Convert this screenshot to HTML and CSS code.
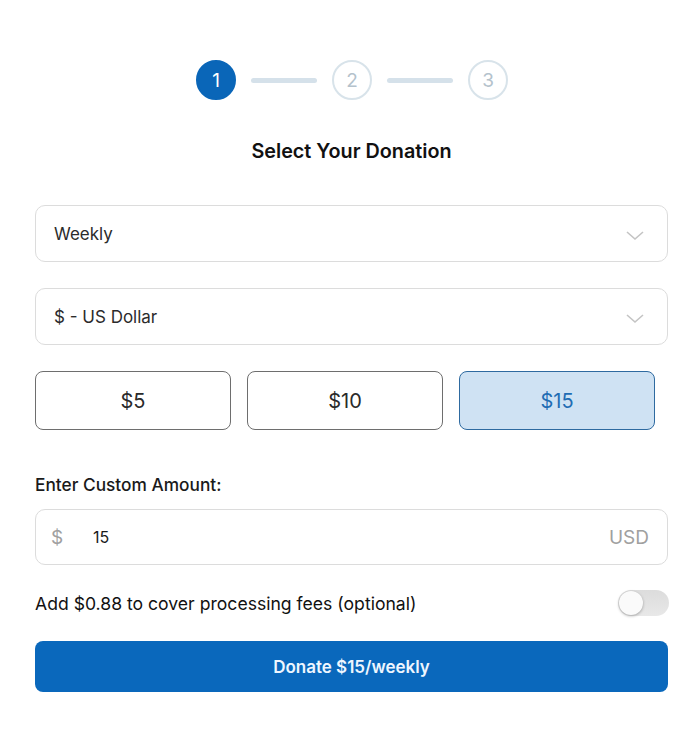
FILE: index.html
```html
<!DOCTYPE html>
<html lang="en">
<head>
<meta charset="utf-8">
<title>Donation</title>
<link rel="stylesheet" href="styles.css">
</head>
<body>
<main class="form">
  <div class="steps">
    <div class="step active">1</div>
    <div class="step-line"></div>
    <div class="step">2</div>
    <div class="step-line"></div>
    <div class="step">3</div>
  </div>
  <h1 class="title">Select Your Donation</h1>

  <div class="select first">
    <span>Weekly</span>
    <svg class="chev" width="20" height="12" viewBox="0 0 20 12"><path d="M2 2 L10 9 L18 2" fill="none" stroke="#c4c4c4" stroke-width="1.6"/></svg>
  </div>
  <div class="select">
    <span>$ - US Dollar</span>
    <svg class="chev" width="20" height="12" viewBox="0 0 20 12"><path d="M2 2 L10 9 L18 2" fill="none" stroke="#c4c4c4" stroke-width="1.6"/></svg>
  </div>

  <div class="amounts">
    <div class="amount">$5</div>
    <div class="amount">$10</div>
    <div class="amount selected">$15</div>
  </div>

  <label class="label">Enter Custom Amount:</label>
  <div class="custom">
    <span class="cur">$</span>
    <span class="val">15</span>
    <span class="code">USD</span>
  </div>

  <div class="fees">
    <span>Add $0.88 to cover processing fees (optional)</span>
    <div class="toggle"><div class="knob"></div></div>
  </div>

  <button class="donate">Donate $15/weekly</button>
</main>
</body>
</html>
```

FILE: styles.css
```css
* { box-sizing: border-box; }
body {
  margin: 0;
  background: #fff;
  font-family: Inter, "Noto Sans", sans-serif;
  color: #1a1a1a;
}
.form {
  width: 633px;
  margin: 0 0 0 35px;
  padding-top: 60px;
  display: flex;
  flex-direction: column;
}
.steps {
  display: flex;
  align-items: center;
  justify-content: center;
  gap: 15px;
  margin-left: 1px;
}
.step {
  width: 40px;
  height: 40px;
  border-radius: 50%;
  border: 2px solid #d8e3ea;
  color: #b4c2cc;
  display: flex;
  align-items: center;
  justify-content: center;
  font-size: 19px;
}
.step.active {
  background: #0a66b8;
  border-color: #0a66b8;
  color: #fff;
}
.step-line {
  width: 66px;
  height: 5px;
  border-radius: 3px;
  background: #d5e1ea;
}
.title {
  margin: 38px 0 0;
  text-align: center;
  font-size: 19.8px;
  font-weight: 600;
  color: #111;
  line-height: 26px;
}
.select {
  height: 57px;
  border: 1px solid #dcdcdc;
  border-radius: 10px;
  display: flex;
  align-items: center;
  justify-content: space-between;
  padding: 0 22px 0 18px;
  font-size: 17px;
  color: #2b2b2b;
  margin-top: 26px;
}
.select.first { margin-top: 41px; }
.chev { margin-top: 4px; }
.amounts {
  display: grid;
  grid-template-columns: repeat(3, 196px);
  gap: 16px;
  margin-top: 26px;
}
.amount {
  height: 59px;
  border: 1px solid #6e6e6e;
  border-radius: 8px;
  display: flex;
  align-items: center;
  justify-content: center;
  font-size: 20px;
  color: #2a2a2a;
}
.amount.selected {
  background: #cfe2f3;
  border-color: #2e6aa0;
  color: #1f6db3;
}
.label {
  margin-top: 44px;
  font-size: 17.3px;
  font-weight: 500;
  color: #1a1a1a;
  line-height: 22px;
}
.custom {
  margin-top: 13px;
  height: 56px;
  border: 1px solid #dcdcdc;
  border-radius: 10px;
  display: flex;
  align-items: center;
  padding: 0 18px 0 15px;
}
.cur { font-size: 19px; color: #a0a0a0; width: 42px; }
.val { font-size: 16px; color: #1a1a1a; flex: 1; }
.code { font-size: 19px; color: #a0a0a0; }
.fees {
  margin-top: 25px;
  display: flex;
  align-items: center;
  justify-content: space-between;
  font-size: 17.6px;
  color: #111;
}
.toggle {
  width: 51px;
  height: 26px;
  border-radius: 13px;
  background: linear-gradient(#dcdcdc, #e8e8e8);
  position: relative;
  margin-right: -1px;
}
.knob {
  position: absolute;
  left: 1px;
  top: 1px;
  width: 24px;
  height: 24px;
  border-radius: 50%;
  background: #fafafa;
  box-shadow: 0 1px 3px rgba(0,0,0,0.3);
}
.donate {
  margin-top: 25px;
  height: 51px;
  border: none;
  border-radius: 8px;
  background: #0a68bc;
  color: #eef6ff;
  font-family: Inter, "Noto Sans", sans-serif;
  font-size: 17px;
  font-weight: 600;
}
```
